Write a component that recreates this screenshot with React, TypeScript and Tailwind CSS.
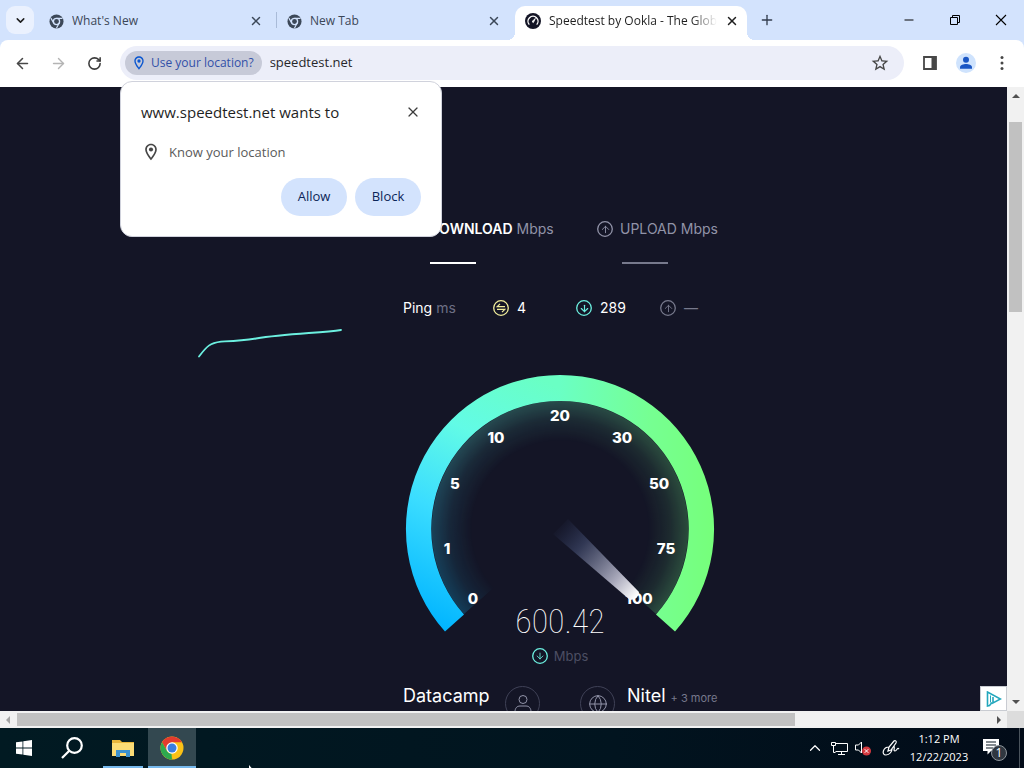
import type { ReactNode } from 'react';
import {
  ArrowDown,
  ArrowLeft,
  ArrowRight,
  ArrowUp,
  ChevronDown,
  ChevronUp,
  Globe,
  Minus,
  Plus,
  RotateCw,
  X,
} from 'lucide-react';
import { MdOutlineLocationOn, MdOutlineStarBorder } from 'react-icons/md';

const GAUGE_LABELS = [
  { value: '0', x: 473, y: 604 },
  { value: '1', x: 447, y: 554 },
  { value: '5', x: 455, y: 489 },
  { value: '10', x: 496, y: 443 },
  { value: '20', x: 560, y: 421 },
  { value: '30', x: 622, y: 443 },
  { value: '50', x: 659, y: 489 },
  { value: '75', x: 666, y: 554 },
  { value: '100', x: 639, y: 604 },
];

function ChromeMono() {
  return (
    <svg viewBox="0 0 16 16" className="size-[15px] shrink-0">
      <circle cx="8" cy="8" r="7.5" fill="#3c4858" />
      <circle cx="8" cy="8" r="3.3" fill="#3c4858" stroke="#d3e3fd" strokeWidth="1.4" />
      <path d="M8 4.6h6.4M5.1 9.7 2 4.4M10.9 9.7l-3 5.4" stroke="#d3e3fd" strokeWidth="1.2" fill="none" />
    </svg>
  );
}

function SpeedtestIcon() {
  return (
    <svg viewBox="0 0 16 16" className="size-4 shrink-0">
      <circle cx="8" cy="8" r="8" fill="#141526" />
      <path d="M4.3 11.6a5 5 0 1 1 7.4 0" fill="none" stroke="#fff" strokeWidth="1.4" />
      <path d="m7 8.6 3.4-3.2-2 4.2z" fill="#fff" stroke="#fff" strokeWidth=".8" />
    </svg>
  );
}

function ChromeColor() {
  return (
    <svg viewBox="0 0 48 48" className="size-6">
      <circle cx="24" cy="24" r="23" fill="#fbc116" />
      <path d="M4.1 12.5A23 23 0 0 1 43.9 12.5H24L14 29.8z" fill="#e33b2e" />
      <path d="M4.1 12.5 14 29.8a11.5 11.5 0 0 0 10 5.7h3.5L24 47A23 23 0 0 1 4.1 12.5z" fill="#2da94f" />
      <path d="m34 29.8-10 17.2-1-11.5z" fill="#fbc116" />
      <circle cx="24" cy="24" r="11.5" fill="#fff" />
      <circle cx="24" cy="24" r="9" fill="#3a7de0" />
    </svg>
  );
}

function Tab({ title, icon, active = false }: { title: string; icon: ReactNode; active?: boolean }) {
  return (
    <div
      className={`relative flex h-[34px] min-w-0 flex-1 items-center gap-2 pb-1 pl-2.5 ${
        active ? 'max-w-[232px] rounded-t-[10px] bg-white pr-2' : 'max-w-[238px] pr-3.5'
      }`}
    >
      {icon}
      <span
        className={`min-w-0 flex-1 overflow-hidden whitespace-nowrap text-[12px] leading-4 ${
          active
            ? 'text-[#1f1f1f] [mask-image:linear-gradient(to_right,black_85%,transparent)]'
            : 'text-[#3b4657]'
        }`}
      >
        {title}
      </span>
      <button aria-label={`Close ${title}`} className="shrink-0">
        <X size={14} strokeWidth={2.5} color={active ? '#1f1f1f' : '#3c4858'} />
      </button>
      {active && (
        <>
          <span className="absolute -left-2 bottom-0 size-2 bg-[radial-gradient(circle_at_0_0,transparent_8px,white_8px)]" />
          <span className="absolute -right-2 bottom-0 size-2 bg-[radial-gradient(circle_at_100%_0,transparent_8px,white_8px)]" />
        </>
      )}
    </div>
  );
}

function TabStrip() {
  return (
    <div className="flex h-10 shrink-0 items-end bg-[#d3e3fd]">
      <button
        aria-label="Search tabs"
        className="mb-1.5 ml-1.5 mr-[5px] flex size-7 shrink-0 items-center justify-center rounded-[9px] bg-[#eaf1fe]"
      >
        <ChevronDown size={13} strokeWidth={2.8} color="#1f1f1f" />
      </button>
      <div className="flex min-w-0 flex-1 items-end">
        <Tab title="What's New" icon={<ChromeMono />} />
        <span className="-ml-px mb-3 h-4 w-px shrink-0 bg-[#a9bbd8]" />
        <Tab title="New Tab" icon={<ChromeMono />} />
        <Tab title="Speedtest by Ookla - The Global" icon={<SpeedtestIcon />} active />
        <button aria-label="New tab" className="mb-1.5 ml-1.5 flex size-7 shrink-0 items-center justify-center">
          <Plus size={16} strokeWidth={2} color="#333d4d" />
        </button>
      </div>
      <div className="flex h-full shrink-0 items-center">
        <button aria-label="Minimize" className="flex w-[46px] justify-center">
          <Minus size={14} strokeWidth={1.7} />
        </button>
        <button aria-label="Restore" className="flex w-[46px] justify-center">
          <svg viewBox="0 0 12 12" className="size-3" fill="none" stroke="#000">
            <path d="M1.5 3.5h7v7h-7zM3.5 3.5v-2h7v7h-2" />
          </svg>
        </button>
        <button aria-label="Close" className="flex w-[46px] justify-center">
          <svg viewBox="0 0 12 12" className="size-3" fill="none" stroke="#000" strokeWidth="1.1">
            <path d="m1 1 10 10M11 1 1 11" />
          </svg>
        </button>
      </div>
    </div>
  );
}

function PermissionPopup() {
  return (
    <div
      role="dialog"
      aria-label="Location permission"
      className="absolute left-0 top-[35px] z-10 flex w-[322px] flex-col rounded-xl border border-[#d0d2dc] bg-white px-5 pb-5 pt-[18px]"
    >
      <div className="flex items-center justify-between">
        <h2 className="text-[15px] font-medium leading-6 text-[#1f1f1f]">www.speedtest.net wants to</h2>
        <button aria-label="Dismiss">
          <X size={16} strokeWidth={1.8} color="#3c3c3c" />
        </button>
      </div>
      <div className="mt-[18px] flex items-center gap-2">
        <MdOutlineLocationOn size={20} color="#474747" />
        <span className="text-[13px] leading-5 text-[#5a5a5a]">Know your location</span>
      </div>
      <div className="mt-4 flex justify-end gap-2">
        <button className="h-[38px] w-[66px] rounded-full bg-[#d3e3fd] text-[13px] font-medium text-[#0b2559]">
          Allow
        </button>
        <button className="h-[38px] w-[66px] rounded-full bg-[#d3e3fd] text-[13px] font-medium text-[#0b2559]">
          Block
        </button>
      </div>
    </div>
  );
}

function Toolbar() {
  return (
    <div className="bg-[#d3e3fd]">
      <div className="flex h-[47px] items-center rounded-t-lg bg-white px-1 pb-px">
        <button aria-label="Back" className="flex w-9 shrink-0 justify-center">
          <ArrowLeft size={17} strokeWidth={2.2} color="#474747" />
        </button>
        <button aria-label="Forward" className="flex w-9 shrink-0 justify-center">
          <ArrowRight size={17} strokeWidth={2} color="#b4b4b4" />
        </button>
        <button aria-label="Reload" className="flex w-9 shrink-0 justify-center">
          <RotateCw size={15} strokeWidth={2.5} color="#3c3c3c" />
        </button>
        <div className="relative mx-2 flex h-[34px] min-w-0 flex-1 items-center gap-2 rounded-full bg-[#eceef9] pl-[5px] pr-3.5">
          <button className="flex h-6 shrink-0 items-center gap-1 rounded-full bg-[#c7cad8] pl-1.5 pr-2 text-[12px] font-medium text-[#3250a8]">
            <MdOutlineLocationOn size={16} color="#0b57d0" />
            Use your location?
          </button>
          <input
            aria-label="Address"
            defaultValue="speedtest.net"
            className="min-w-0 flex-1 bg-transparent text-[13px] text-[#27272b] outline-none"
          />
          <button aria-label="Bookmark this tab">
            <MdOutlineStarBorder size={20} color="#474747" />
          </button>
          <PermissionPopup />
        </div>
        <button aria-label="Side panel" className="flex w-9 shrink-0 justify-center">
          <svg viewBox="0 0 16 16" className="size-4">
            <path d="M2 2h12v12H2z" fill="#fff" stroke="#474747" strokeWidth="1.8" />
            <path d="M9.5 2H14v12H9.5z" fill="#474747" />
          </svg>
        </button>
        <button aria-label="Profile" className="flex w-9 shrink-0 justify-center">
          <svg viewBox="0 0 20 20" className="size-5">
            <circle cx="10" cy="10" r="10" fill="#cfe3fd" />
            <circle cx="10" cy="6.8" r="3" fill="#1a56c4" />
            <path d="M4 15.8v-1.6c0-2 3.5-3.2 6-3.2s6 1.2 6 3.2v1.6z" fill="#1a56c4" />
          </svg>
        </button>
        <button aria-label="Menu" className="flex w-9 shrink-0 justify-center">
          <svg viewBox="0 0 16 16" className="size-4" fill="#474747">
            <circle cx="8" cy="2.4" r="1.5" />
            <circle cx="8" cy="8" r="1.5" />
            <circle cx="8" cy="13.6" r="1.5" />
          </svg>
        </button>
      </div>
    </div>
  );
}

function CircleIcon({ className, children }: { className: string; children: ReactNode }) {
  return (
    <span className={`relative flex size-4 shrink-0 items-center justify-center ${className}`}>
      <svg viewBox="0 0 16 16" className="absolute inset-0 size-4" fill="none" stroke="currentColor">
        <circle cx="8" cy="8" r="7.3" strokeWidth="1.3" />
      </svg>
      {children}
    </span>
  );
}

function Gauge() {
  return (
    <svg viewBox="400 370 320 276" className="mt-[52px] h-[276px] w-full" role="img" aria-label="Download speed gauge">
      <defs>
        <linearGradient id="arcLeft" gradientUnits="userSpaceOnUse" x1="440" y1="631" x2="560" y2="388">
          <stop offset="0" stopColor="#00b4ff" />
          <stop offset=".4" stopColor="#3bddff" />
          <stop offset=".71" stopColor="#62fbe6" />
          <stop offset="1" stopColor="#6affc4" />
        </linearGradient>
        <linearGradient id="arcRight" gradientUnits="userSpaceOnUse" x1="560" y1="0" x2="710" y2="0">
          <stop offset="0" stopColor="#6affc4" />
          <stop offset=".6" stopColor="#76ff92" />
          <stop offset="1" stopColor="#76ff7c" />
        </linearGradient>
        <radialGradient id="fade" gradientUnits="userSpaceOnUse" cx="560" cy="529" r="129">
          <stop offset=".68" stopColor="#fff" stopOpacity="0" />
          <stop offset=".85" stopColor="#fff" stopOpacity=".09" />
          <stop offset="1" stopColor="#fff" stopOpacity=".24" />
        </radialGradient>
        <mask id="glow">
          <circle cx="560" cy="529" r="129" fill="url(#fade)" />
        </mask>
        <linearGradient id="needle" gradientUnits="userSpaceOnUse" x1="556" y1="526" x2="636" y2="597">
          <stop offset="0" stopColor="#2b3558" stopOpacity="0" />
          <stop offset=".3" stopColor="#38405f" stopOpacity=".8" />
          <stop offset=".75" stopColor="#a9a9bb" />
          <stop offset="1" stopColor="#fff" />
        </linearGradient>
      </defs>
      <g mask="url(#glow)">
        <path d="M560 529 464 614A128 128 0 0 1 560 401z" fill="url(#arcLeft)" />
        <path d="M560 529V401A128 128 0 0 1 656 614z" fill="url(#arcRight)" />
      </g>
      <path d="M445 631.5A154 154 0 0 1 560.5 375V401A128 128 0 0 0 464 614.5z" fill="url(#arcLeft)" />
      <path d="M560 375A154 154 0 0 1 675 631.5L656 614.5A128 128 0 0 0 560 401z" fill="url(#arcRight)" />
      <g fill="#fff" textAnchor="middle" className="font-['Inter'] text-[15px] font-extrabold">
        {GAUGE_LABELS.map((label) => (
          <text key={label.value} x={label.x} y={label.y}>
            {label.value}
          </text>
        ))}
      </g>
      <path d="m553 534 15-15 71 73q0 7-9 8z" fill="url(#needle)" />
      <text x="560" y="633" fill="#fff" textAnchor="middle" className="font-['Roboto_Condensed','Roboto'] text-[34px] font-thin">
        600.42
      </text>
    </svg>
  );
}

function HistoryLine() {
  return (
    <svg viewBox="0 0 148 32" className="h-8 w-[148px]" fill="none">
      <path
        d="M3 29.5C11 19 14 16 25 14.600 40 14 45 14 60 11.500 90 6.500 125 6 145 3"
        stroke="#6cf0e0"
        strokeWidth="1.8"
        strokeLinecap="round"
      />
    </svg>
  );
}

function SpeedtestPage() {
  return (
    <main className="relative flex min-w-0 flex-1 overflow-hidden bg-[#141526] font-['Inter'] text-white">
      <div className="flex w-[400px] shrink-0 justify-end pr-[56px] pt-[240px]">
        <HistoryLine />
      </div>
      <section className="w-80 shrink-0 pt-[132px]">
        <div className="grid grid-cols-[192px_1fr] text-[14px] leading-5">
          <div className="flex items-center gap-2 pl-[5px]">
            <CircleIcon className="text-[#6cf0e0]">
              <ArrowDown size={11} />
            </CircleIcon>
            <span className="whitespace-nowrap text-[#9193a8]">
              <span className="font-semibold text-white">DOWNLOAD</span> Mbps
            </span>
          </div>
          <div className="flex items-center gap-[7px] pl-[5px] text-[#9193a8]">
            <CircleIcon className="">
              <ArrowUp size={11} />
            </CircleIcon>
            <span className="whitespace-nowrap">UPLOAD Mbps</span>
          </div>
          <span className="ml-[30px] mt-[23px] h-0.5 w-[46px] bg-white" />
          <span className="ml-[30px] mt-[23px] h-0.5 w-[46px] bg-[#77798c]" />
        </div>
        <div className="mt-[34px] flex items-center pl-[3px] text-[14px] leading-5">
          <span className="w-[90px]">
            Ping <span className="text-[#6d6f84]">ms</span>
          </span>
          <span className="flex w-[83px] items-center gap-2">
            <CircleIcon className="text-[#f2ee9b]">
              <svg viewBox="0 0 10 10" className="size-2.5" fill="none" stroke="currentColor" strokeWidth="1.2">
                <path d="M4 .8 1.2 3.7H9M6 9.2l2.800-2.900H1" />
              </svg>
            </CircleIcon>
            4
          </span>
          <span className="flex w-[84px] items-center gap-2">
            <CircleIcon className="text-[#6cf0e0]">
              <ArrowDown size={11} strokeWidth={2.5} />
            </CircleIcon>
            289
          </span>
          <span className="flex items-center gap-2 text-[#77798c]">
            <CircleIcon className="">
              <ArrowUp size={11} />
            </CircleIcon>
            —
          </span>
        </div>
        <Gauge />
        <div className="flex items-center justify-center gap-1.5 text-[13px] leading-5 text-[#4c4e63]">
          <CircleIcon className="text-[#6cf0e0]">
            <ArrowDown size={10} />
          </CircleIcon>
          Mbps
        </div>
        <div className="mt-5 flex items-start whitespace-nowrap text-[18px] leading-5">
          <span className="w-[105px] pl-[3px]">Datacamp</span>
          <span className="flex size-[35px] shrink-0 items-center justify-center rounded-full border border-[#3f4156]">
            <svg viewBox="0 0 20 20" className="size-5" fill="none" stroke="#9193a8">
              <circle cx="10" cy="5.5" r="4" />
              <path d="M2 18c0-4 2-6 5-6h6c3 0 5 2 5 6z" />
            </svg>
          </span>
          <span className="ml-10 flex size-[35px] shrink-0 items-center justify-center rounded-full border border-[#3f4156]">
            <Globe size={20} strokeWidth={1.2} color="#9193a8" />
          </span>
          <span className="pl-3">
            Nitel <span className="text-[11px] text-[#77798c]">+ 3 more</span>
          </span>
        </div>
      </section>
      <a
        href="#ad"
        aria-label="Ad choices"
        className="absolute bottom-0 right-0 flex h-[25px] w-[27px] items-center justify-center border border-[#c9ccd2] bg-white"
      >
        <svg viewBox="0 0 16 16" className="size-4" fill="none" stroke="#23a7bd" strokeWidth="1.6">
          <path d="M6 11.5 3.5 14.5 1.5 15V1l13 7-7.500 4V6" />
          <path d="M4.5 4.5v7" strokeWidth="1" />
        </svg>
      </a>
    </main>
  );
}

function VerticalScrollbar() {
  return (
    <div className="flex w-[17px] shrink-0 flex-col items-center bg-[#f1f1f1]">
      <span className="mt-[7px] border-x-4 border-b-4 border-x-transparent border-b-[#505050]" />
      <span className="mt-6 h-[30.5%] w-[13px] bg-[#c1c1c1]" />
      <span className="mb-[7px] mt-auto border-x-4 border-t-4 border-x-transparent border-t-[#505050]" />
    </div>
  );
}

function HorizontalScrollbar() {
  return (
    <div className="flex h-[17px] shrink-0 bg-[#f1f1f1]">
      <div className="flex min-w-0 flex-1 items-center">
        <span className="ml-1.5 border-y-4 border-r-4 border-y-transparent border-r-[#a3a3a3]" />
        <span className="ml-[7px] h-[13px] w-[77.3%] bg-[#c1c1c1]" />
        <span className="ml-auto mr-1.5 border-y-4 border-l-4 border-y-transparent border-l-[#505050]" />
      </div>
      <span className="w-[17px] bg-[#dcdcdc]" />
    </div>
  );
}

function Taskbar() {
  return (
    <footer className="relative flex h-10 shrink-0 items-center overflow-hidden bg-[linear-gradient(to_right,#011a22,#01141f_60%,#020b18)] text-white">
      <button aria-label="Start" className="flex h-full w-12 items-center justify-center">
        <svg viewBox="0 0 16 16" className="size-4" fill="#fff">
          <path d="M0 2.3 6.5 1.4v6.2H0zM7.3 1.3 16 0v7.6H7.3zM0 8.4h6.5v6.2L0 13.7zM7.3 8.4H16V16l-8.7-1.3z" />
        </svg>
      </button>
      <button aria-label="Search" className="flex h-full w-12 items-center justify-center">
        <svg viewBox="0 0 22 22" className="size-[22px]" fill="none" stroke="#fff" strokeWidth="2.2">
          <circle cx="13.5" cy="8.5" r="7.3" />
          <path d="M8.3 13.7 1 21" />
        </svg>
      </button>
      <button aria-label="File Explorer" className="ml-[3px] mr-px flex h-full w-12 items-center justify-center">
        <span className="flex h-full w-10 items-center justify-center border-b-2 border-[#76b9ed] pt-0.5">
          <svg viewBox="0 0 22 18" className="h-[18px] w-[22px]">
            <path d="M0 1h8l2 2h12v14H0z" fill="#e8b63c" />
            <path d="M0 4h22v13H0z" fill="#fbdc76" />
            <path d="M4 18v-7h14v7h-4v-4H8v4z" fill="#3c92cf" />
          </svg>
        </span>
      </button>
      <button
        aria-label="Google Chrome"
        className="flex h-full w-12 items-center justify-center border-b-2 border-[#76b9ed] bg-[#334850] pt-0.5"
      >
        <ChromeColor />
      </button>
      <svg viewBox="0 0 8 12" className="mb-[-46px] ml-[53px] h-3 w-2">
        <path d="M0 0v11l3-3h4z" fill="#fff" />
      </svg>
      <div className="ml-auto flex h-full items-center">
        <button aria-label="Show hidden icons" className="flex w-6 justify-center">
          <ChevronUp size={18} strokeWidth={1.6} />
        </button>
        <button aria-label="Network" className="flex w-6 justify-center">
          <svg viewBox="0 0 17 15" className="h-[15px] w-[17px]" fill="none" stroke="#fff">
            <path d="M5 2.5h11.5v8H4.5M10.5 10.5v3M7 13.5h7M.5 1.5h4v3h-4zM2.5 4.5v7h2" />
          </svg>
        </button>
        <button aria-label="Volume" className="flex w-6 justify-center">
          <svg viewBox="0 0 18 16" className="h-4 w-[18px]" fill="none">
            <path d="M1.5 5h3l3-3v11l-3-3h-3z" stroke="#fff" />
            <circle cx="12.5" cy="11" r="4.5" fill="#d5393f" />
            <path d="m10.7 9.2 3.6 3.6M14.3 9.2l-3.6 3.6" stroke="#fff" />
          </svg>
        </button>
        <button aria-label="Windows Ink" className="flex w-8 justify-center">
          <svg viewBox="0 0 18 18" className="size-[18px]" fill="none" stroke="#fff" strokeWidth="1.2">
            <path d="m6 12 1-4 5-6c1-1 3 0 2 2L9 11zM7 8c-6 0-8 8-3 8 4 0 6-4 6-6M12 7c1 2-1 5 1 5 2 0 2-4 4-2" />
          </svg>
        </button>
        <div className="w-16 whitespace-nowrap text-center text-[11px] leading-[18px]">
          <div>1:12 PM</div>
          <div>12/22/2023</div>
        </div>
        <button aria-label="1 notification" className="mx-2.5 flex w-7 justify-center">
          <svg viewBox="0 0 26 26" className="size-[26px]">
            <path d="M1 4h16v12H9l-3.500 3.500V16H1z" fill="#fff" />
            <path d="M4 7h10M4 10h10M4 13h7" stroke="#0b1822" strokeWidth="1.2" />
            <circle cx="17" cy="18" r="7.5" fill="#303740" stroke="#8d949b" />
            <text x="17" y="22" textAnchor="middle" fill="#fff" className="text-[12px]">
              1
            </text>
          </svg>
        </button>
        <span className="mr-1 h-full w-px bg-[#4a535c]" />
      </div>
    </footer>
  );
}

export default function App() {
  return (
    <div className="flex h-screen flex-col overflow-hidden font-['Open_Sans',sans-serif]">
      <TabStrip />
      <Toolbar />
      <div className="flex min-h-0 flex-1">
        <SpeedtestPage />
        <VerticalScrollbar />
      </div>
      <HorizontalScrollbar />
      <Taskbar />
    </div>
  );
}
